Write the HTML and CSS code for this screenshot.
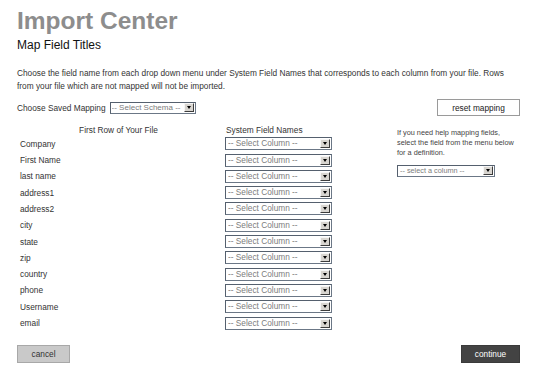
FILE: index.html
```html
<!DOCTYPE html>
<html>
<head>
<meta charset="utf-8">
<title>Import Center</title>
<link rel="stylesheet" href="styles.css">
</head>
<body>
<div class="page">
  <h1 class="title">Import Center</h1>
  <h2 class="subtitle">Map Field Titles</h2>
  <p class="intro">Choose the field name from each drop down menu under System Field Names that corresponds to each column from your file. Rows<br>from your file which are not mapped will not be imported.</p>

  <div class="saved">
    <span class="saved-label">Choose Saved Mapping</span>
    <span class="sel sel-schema"><span class="sel-text">-- Select Schema --</span><span class="sel-btn"></span></span>
    <button class="btn btn-reset">reset mapping</button>
  </div>

  <div class="mapping">
    <div class="grid">
      <div class="hdr hdr-file">First Row of Your File</div>
      <div class="hdr hdr-sys">System Field Names</div>

      <div class="lbl">Company</div>
      <div class="cell"><span class="sel"><span class="sel-text">-- Select Column --</span><span class="sel-btn"></span></span></div>
      <div class="lbl">First Name</div>
      <div class="cell"><span class="sel"><span class="sel-text">-- Select Column --</span><span class="sel-btn"></span></span></div>
      <div class="lbl">last name</div>
      <div class="cell"><span class="sel"><span class="sel-text">-- Select Column --</span><span class="sel-btn"></span></span></div>
      <div class="lbl">address1</div>
      <div class="cell"><span class="sel"><span class="sel-text">-- Select Column --</span><span class="sel-btn"></span></span></div>
      <div class="lbl">address2</div>
      <div class="cell"><span class="sel"><span class="sel-text">-- Select Column --</span><span class="sel-btn"></span></span></div>
      <div class="lbl">city</div>
      <div class="cell"><span class="sel"><span class="sel-text">-- Select Column --</span><span class="sel-btn"></span></span></div>
      <div class="lbl">state</div>
      <div class="cell"><span class="sel"><span class="sel-text">-- Select Column --</span><span class="sel-btn"></span></span></div>
      <div class="lbl">zip</div>
      <div class="cell"><span class="sel"><span class="sel-text">-- Select Column --</span><span class="sel-btn"></span></span></div>
      <div class="lbl">country</div>
      <div class="cell"><span class="sel"><span class="sel-text">-- Select Column --</span><span class="sel-btn"></span></span></div>
      <div class="lbl">phone</div>
      <div class="cell"><span class="sel"><span class="sel-text">-- Select Column --</span><span class="sel-btn"></span></span></div>
      <div class="lbl">Username</div>
      <div class="cell"><span class="sel"><span class="sel-text">-- Select Column --</span><span class="sel-btn"></span></span></div>
      <div class="lbl">email</div>
      <div class="cell"><span class="sel"><span class="sel-text">-- Select Column --</span><span class="sel-btn"></span></span></div>
    </div>

    <aside class="help">
      <p class="help-text">If you need help mapping fields,<br>select the field from the menu below<br>for a definition.</p>
      <span class="sel sel-help"><span class="sel-text">-- select a column --</span><span class="sel-btn"></span></span>
    </aside>
  </div>

  <div class="actions">
    <button class="btn btn-cancel">cancel</button>
    <button class="btn btn-continue">continue</button>
  </div>
</div>
</body>
</html>
```

FILE: styles.css
```css
html, body {
  margin: 0;
  padding: 0;
  background: #ffffff;
}

body {
  font-family: "Liberation Sans", Arial, Helvetica, sans-serif;
  color: #333333;
}

.page {
  width: 503px;
  padding: 7px 17px 0 17px;
}

.title {
  margin: 0;
  font-size: 24.5px;
  line-height: 28px;
  font-weight: 700;
  color: #8d8d8d;
}

.subtitle {
  margin: 3px 0 0 0;
  font-size: 12px;
  line-height: 14px;
  font-weight: 400;
  color: #111111;
}

.intro {
  margin: 15px 0 0 0;
  font-size: 8.3px;
  line-height: 12.5px;
  color: #333333;
}

.saved {
  margin-top: 7px;
  height: 17px;
  display: flex;
  align-items: center;
  font-size: 8.3px;
}

.saved-label {
  color: #333333;
}

.sel {
  box-sizing: border-box;
  display: inline-flex;
  align-items: center;
  width: 107px;
  height: 13px;
  border: 1px solid #6b7786;
  border-top-color: #55606e;
  border-left-color: #55606e;
  background: #ffffff;
  padding-left: 2px;
  font-size: 8.3px;
  color: #7c7c7c;
  white-space: nowrap;
  overflow: hidden;
}

.sel-text {
  flex: 1;
  line-height: 11px;
  overflow: hidden;
}

.sel-btn {
  position: relative;
  flex: none;
  box-sizing: border-box;
  width: 10px;
  height: 9px;
  margin-right: 1px;
  background: #d8d5d0;
  border: 1px solid;
  border-color: #f6f6f6 #3c3c3c #3c3c3c #f6f6f6;
}

.sel-btn::after {
  content: "";
  position: absolute;
  left: 2px;
  top: 2px;
  border-left: 2.5px solid transparent;
  border-right: 2.5px solid transparent;
  border-top: 3px solid #000000;
}

.sel-schema {
  width: 86px;
  height: 12px;
  margin-left: 4px;
  padding-left: 1px;
  font-size: 8px;
}

.btn {
  box-sizing: border-box;
  font-family: "Liberation Sans", Arial, Helvetica, sans-serif;
  font-size: 8.3px;
  padding: 0;
  margin: 0;
  cursor: pointer;
}

.btn-reset {
  margin-left: auto;
  width: 83px;
  height: 17px;
  background: #ffffff;
  border: 1px solid #9a9a9a;
  color: #222222;
}

.mapping {
  margin-top: 8.6px;
  display: flex;
  align-items: flex-start;
}

.grid {
  display: grid;
  grid-template-columns: 203px 107px;
  column-gap: 5px;
  grid-template-rows: 11px;
  grid-auto-rows: 16.3px;
  font-size: 8.3px;
}

.hdr {
  line-height: 11px;
  color: #333333;
}

.hdr-file {
  text-align: center;
}

.hdr-sys {
  padding-left: 1px;
}

.lbl {
  padding-left: 3px;
  display: flex;
  align-items: center;
  color: #333333;
}

.cell {
  display: flex;
  align-items: center;
}

.help {
  margin-left: 65px;
  margin-top: 3.4px;
}

.help-text {
  margin: 0;
  font-size: 7.3px;
  line-height: 10px;
  color: #444444;
}

.sel-help {
  margin-top: 7px;
  width: 98px;
  height: 12px;
  font-size: 7.3px;
}

.actions {
  margin-top: 13.75px;
  display: flex;
  justify-content: space-between;
}

.btn-cancel {
  width: 53px;
  height: 18px;
  background: #c9c9c9;
  border: 1px solid #a8a8a8;
  color: #333333;
}

.btn-continue {
  width: 59px;
  height: 18px;
  background: #434343;
  border: 1px solid #3a3a3a;
  color: #ffffff;
}
```
